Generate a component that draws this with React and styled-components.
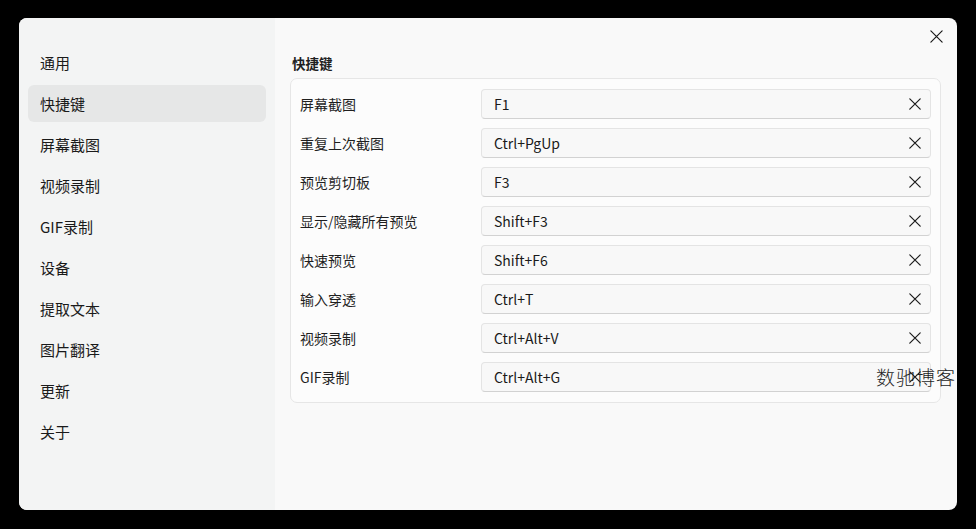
import React from "react";
import styled, { createGlobalStyle } from "styled-components";

const GlobalStyle = createGlobalStyle`
  html, body {
    margin: 0;
    padding: 0;
    background: #000;
  }
  body {
    font-family: "Noto Sans CJK SC", "Noto Sans", sans-serif;
    -webkit-font-smoothing: antialiased;
  }
`;

const menu = [
    "通用",
    "快捷键",
    "屏幕截图",
    "视频录制",
    "GIF录制",
    "设备",
    "提取文本",
    "图片翻译",
    "更新",
    "关于",
];

const shortcuts = [
    { label: "屏幕截图", keys: "F1" },
    { label: "重复上次截图", keys: "Ctrl+PgUp" },
    { label: "预览剪切板", keys: "F3" },
    { label: "显示/隐藏所有预览", keys: "Shift+F3" },
    { label: "快速预览", keys: "Shift+F6" },
    { label: "输入穿透", keys: "Ctrl+T" },
    { label: "视频录制", keys: "Ctrl+Alt+V" },
    { label: "GIF录制", keys: "Ctrl+Alt+G" },
];

const CrossIcon = ({ size = 12, stroke = 1.2 }) => (
    <svg width={size} height={size} viewBox="0 0 12 12" fill="none">
        <path
            d="M0.8 0.8 L11.2 11.2 M11.2 0.8 L0.8 11.2"
            stroke="#1c1c1c"
            strokeWidth={stroke}
            strokeLinecap="round"
        />
    </svg>
);

const App = () => {
    return (
        <Page>
            <GlobalStyle />
            <Dialog>
                <Sidebar>
                    {menu.map((item) => (
                        <MenuItem key={item} $active={item === "快捷键"}>
                            {item}
                        </MenuItem>
                    ))}
                </Sidebar>
                <Content>
                    <TopBar>
                        <CloseButton aria-label="close">
                            <CrossIcon size={13} stroke={1.1} />
                        </CloseButton>
                    </TopBar>
                    <SectionTitle>快捷键</SectionTitle>
                    <Card>
                        {shortcuts.map((row) => (
                            <Row key={row.label}>
                                <Label>{row.label}</Label>
                                <KeyBox>
                                    <KeyText>{row.keys}</KeyText>
                                    <ClearButton aria-label="clear">
                                        <CrossIcon />
                                    </ClearButton>
                                </KeyBox>
                            </Row>
                        ))}
                    </Card>
                </Content>
                <Watermark>数驰博客</Watermark>
            </Dialog>
        </Page>
    );
};

export default App;

const Page = styled.div`
  width: 976px;
  height: 529px;
  box-sizing: border-box;
  padding: 18px 19px 19px 19px;
  overflow: hidden;
`;

const Dialog = styled.div`
  position: relative;
  height: 100%;
  display: grid;
  grid-template-columns: 256px 1fr;
  border-radius: 8px;
  overflow: hidden;
  background: #f9f9f9;
`;

const Sidebar = styled.nav`
  background: #f3f4f4;
  padding: 26px 9px 0 9px;
  display: flex;
  flex-direction: column;
  gap: 4px;
`;

const MenuItem = styled.div`
  height: 37px;
  display: flex;
  align-items: center;
  padding-left: 12px;
  border-radius: 6px;
  font-size: 15px;
  color: #1a1a1a;
  background: ${(p) => (p.$active ? "#e6e7e7" : "transparent")};
`;

const Content = styled.main`
  display: flex;
  flex-direction: column;
  padding: 0 16px 0 15px;
`;

const TopBar = styled.div`
  height: 36px;
  display: flex;
  align-items: center;
  justify-content: flex-end;
`;

const CloseButton = styled.button`
  width: 24px;
  height: 24px;
  margin-right: -7px;
  display: flex;
  align-items: center;
  justify-content: center;
  border: none;
  background: transparent;
  padding: 0;
`;

const SectionTitle = styled.div`
  height: 18px;
  line-height: 18px;
  padding-left: 2px;
  margin-bottom: 6px;
  font-size: 13.5px;
  font-weight: 700;
  color: #1f1f1f;
`;

const Card = styled.section`
  border: 1px solid #e6e6e6;
  border-radius: 7px;
  background: #fcfcfc;
  padding: 10px 9px;
  display: flex;
  flex-direction: column;
  gap: 9px;
`;

const Row = styled.div`
  display: grid;
  grid-template-columns: 181px 1fr;
  align-items: center;
`;

const Label = styled.div`
  font-size: 14px;
  color: #1f1f1f;
`;

const KeyBox = styled.div`
  height: 30px;
  box-sizing: border-box;
  display: flex;
  align-items: center;
  justify-content: space-between;
  padding: 0 9px 0 12px;
  border: 1px solid #e4e4e4;
  border-bottom-color: #d2d2d2;
  border-radius: 4px;
  background: #f8f8f8;
`;

const KeyText = styled.span`
  font-size: 14px;
  color: #1a1a1a;
`;

const ClearButton = styled.span`
  display: flex;
  align-items: center;
`;

const Watermark = styled.div`
  position: absolute;
  left: 857px;
  top: 345px;
  font-size: 19px;
  font-weight: 300;
  letter-spacing: 1px;
  color: #262626;
  white-space: nowrap;
  pointer-events: none;
`;
